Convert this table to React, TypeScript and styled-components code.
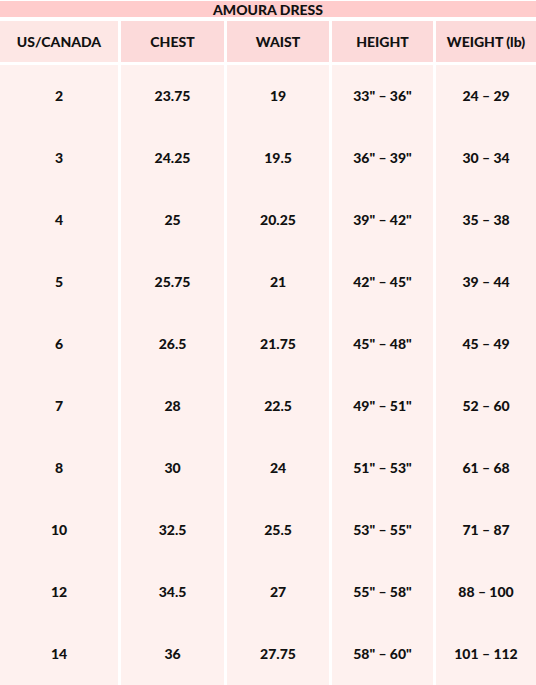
import React from "react";
import styled, { createGlobalStyle } from "styled-components";

const Global = createGlobalStyle`
  html, body { margin: 0; padding: 0; background: #ffffff; }
  body { font-family: Lato, "Open Sans", sans-serif; color: #111; }
`;

const Page = styled.div`
  width: 536px;
  padding-top: 1px;
  display: flex;
  flex-direction: column;
`;

const Title = styled.div`
  height: 16px;
  background: #ffcccc;
  display: flex;
  align-items: center;
  justify-content: center;
  font-weight: 900;
  font-size: 14px;
  color: #111;
  margin-bottom: 4px;
`;

const Row = styled.div<{ $header?: boolean }>`
  display: grid;
  grid-template-columns: 118px 103px 102px 101px 100px;
  column-gap: 3px;
  height: ${(p) => (p.$header ? "41px" : "62px")};
  margin-bottom: ${(p) => (p.$header ? "3px" : "0")};
`;

const Cell = styled.div<{ $bg: string }>`
  background: ${(p) => p.$bg};
  display: flex;
  align-items: center;
  justify-content: center;
  padding-bottom: 1px;
  font-weight: 900;
  font-size: 14px;
  color: #111;
  white-space: nowrap;
`;

const headers = ["US/CANADA", "CHEST", "WAIST", "HEIGHT", "WEIGHT (lb)"];
const rows = [
  ["2", "23.75", "19", "33\" – 36\"", "24 – 29"],
  ["3", "24.25", "19.5", "36\" – 39\"", "30 – 34"],
  ["4", "25", "20.25", "39\" – 42\"", "35 – 38"],
  ["5", "25.75", "21", "42\" – 45\"", "39 – 44"],
  ["6", "26.5", "21.75", "45\" – 48\"", "45 – 49"],
  ["7", "28", "22.5", "49\" – 51\"", "52 – 60"],
  ["8", "30", "24", "51\" – 53\"", "61 – 68"],
  ["10", "32.5", "25.5", "53\" – 55\"", "71 – 87"],
  ["12", "34.5", "27", "55\" – 58\"", "88 – 100"],
  ["14", "36", "27.75", "58\" – 60\"", "101 – 112"],
];

export default function App() {
  return (
    <>
      <Global />
      <Page>
        <Title>AMOURA DRESS</Title>
        <Row $header>
          {headers.map((h, i) => (
            <Cell key={h} $bg={i === 0 ? "#fde7e5" : "#fcdada"}>
              {h}
            </Cell>
          ))}
        </Row>
        {rows.map((r, ri) => (
          <Row key={ri}>
            {r.map((c, ci) => (
              <Cell key={ci} $bg="#fef1ef">
                {c}
              </Cell>
            ))}
          </Row>
        ))}
      </Page>
    </>
  );
}
